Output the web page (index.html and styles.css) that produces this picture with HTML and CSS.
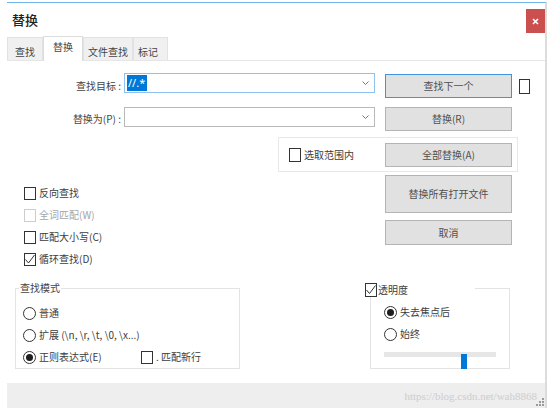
FILE: index.html
```html
<!DOCTYPE html>
<html>
<head>
<meta charset="utf-8">
<link rel="stylesheet" href="styles.css">
</head>
<body>
<div class="window">
  <div class="titlebar">
    <span class="title">替换</span>
    <div class="close"><svg width="7" height="7" viewBox="0 0 7 7"><path d="M1 1L6 6M6 1L1 6" stroke="#fff" stroke-width="1.6"/></svg></div>
  </div>
  <div class="tabs">
    <div class="tab t1">查找</div>
    <div class="tab active t2">替换</div>
    <div class="tab t3">文件查找</div>
    <div class="tab t4">标记</div>
  </div>
  <div class="content">
    <div class="row r1">
      <span class="lbl l1">查找目标 :</span>
      <div class="combo focus"><span class="sel">//.*</span><svg class="chev" width="7" height="4" viewBox="0 0 7 4"><path d="M0.5 0.5L3.5 3.5L6.5 0.5" fill="none" stroke="#777" stroke-width="1"/></svg></div>
      <div class="btn bfocus b1">查找下一个</div>
      <span class="box small"></span>
    </div>
    <div class="row r2">
      <span class="lbl l2">替换为(P) :</span>
      <div class="combo"><span></span><svg class="chev" width="7" height="4" viewBox="0 0 7 4"><path d="M0.5 0.5L3.5 3.5L6.5 0.5" fill="none" stroke="#777" stroke-width="1"/></svg></div>
      <div class="btn b2">替换(R)</div>
    </div>
    <div class="scope">
      <div class="check scopecheck"><span class="box"></span>选取范围内</div>
      <div class="btn b3">全部替换(A)</div>
    </div>
    <div class="lower">
      <div class="options">
        <div class="check"><span class="box"></span>反向查找</div>
        <div class="check disabled"><span class="box"></span>全词匹配(W)</div>
        <div class="check"><span class="box"></span>匹配大小写(C)</div>
        <div class="check"><span class="box"><svg width="12" height="13" viewBox="0 0 12 13"><path d="M1.5 6.5L4.5 10L10.5 2" fill="none" stroke="#333" stroke-width="1"/></svg></span>循环查找(D)</div>
      </div>
      <div class="actions">
        <div class="btn b4">替换所有打开文件</div>
        <div class="btn b5">取消</div>
      </div>
    </div>
    <div class="groups">
      <fieldset class="grp mode">
        <legend class="legend1">查找模式</legend>
        <div class="grpbody mbody">
          <div class="check"><span class="radio"></span>普通</div>
          <div class="check"><span class="radio"></span>扩展 (\n, \r, \t, \0, \x...)</div>
          <div class="check">
            <span class="radioitem"><span class="radio on"></span>正则表达式(E)</span>
            <span class="box"></span>. 匹配新行
          </div>
        </div>
      </fieldset>
      <fieldset class="grp trans">
        <legend class="legend2"><span class="box lbox"><svg width="12" height="14" viewBox="0 0 12 14"><path d="M1.5 7L4.5 10.5L10.5 2.5" fill="none" stroke="#333" stroke-width="1"/></svg></span><span class="ltext">透明度</span></legend>
        <div class="grpbody tbody">
          <div class="check"><span class="radio on"></span>失去焦点后</div>
          <div class="check"><span class="radio"></span>始终</div>
          <div class="slider"><div class="track"></div><div class="thumb"></div></div>
        </div>
      </fieldset>
    </div>
  </div>
  <div class="statusbar">
    <span class="watermark">https://blog.csdn.net/wah8868</span>
    <svg class="grip" width="8" height="8" viewBox="0 0 8 8"><g fill="#9a9a9a"><rect x="6" y="0" width="2" height="2"/><rect x="3" y="3" width="2" height="2"/><rect x="6" y="3" width="2" height="2"/><rect x="0" y="6" width="2" height="2"/><rect x="3" y="6" width="2" height="2"/><rect x="6" y="6" width="2" height="2"/></g></svg>
  </div>
</div>
</body>
</html>
```

FILE: styles.css
```css
* { box-sizing: border-box; margin: 0; padding: 0; }
html, body { width: 549px; height: 415px; background: #fff; overflow: hidden; }
body {
  font-family: "Noto Sans CJK SC", "Noto Sans", sans-serif;
  font-size: 10px;
  line-height: 12px;
  color: #3c3c3c;
}
.window {
  margin: 2px 0 0 7px;
  width: 540px;
  height: 406px;
  border-top: 1px solid #72b3ea;
  border-right: 2px solid #dcdcdc;
  display: flex;
  flex-direction: column;
}
.titlebar {
  height: 33px;
  display: flex;
  justify-content: space-between;
  align-items: flex-start;
}
.title {
  font-size: 13px;
  line-height: 14px;
  padding: 10px 0 0 5px;
  color: #222;
  font-weight: 500;
}
.close {
  width: 19px;
  height: 24px;
  margin-top: 6px;
  background: #c9504f;
  display: flex;
  align-items: center;
  justify-content: center;
}
.tabs {
  height: 25px;
  display: flex;
  align-items: flex-end;
  border-bottom: 1px solid #e6e6e6;
}
.tab {
  height: 23px;
  background: #f0f0f0;
  border: 1px solid #e2e2e2;
  border-bottom: none;
  padding-top: 8px;
  color: #444;
}
.tab.active {
  height: 25px;
  margin-bottom: -1px;
  background: #fff;
  border-color: #dcdcdc;
  padding-top: 4px;
  position: relative;
}
.t1 { width: 36px; padding-left: 7px; }
.t2 { width: 40px; padding-left: 9px; }
.t3 { width: 50px; padding-left: 4px; }
.t4 { width: 35px; padding-left: 4px; }

.content {
  height: 322px;
  padding-top: 12px;
  display: flex;
  flex-direction: column;
}
.row { display: flex; align-items: flex-start; height: 25px; }
.r2 { margin-top: 9px; }
.lbl { width: 114px; text-align: right; color: #444; }
.l1 { padding-top: 7px; }
.l2 { padding-top: 6px; }
.combo {
  margin-left: 3px;
  width: 251px;
  height: 20px;
  border: 1px solid #b9b9b9;
  display: flex;
  align-items: center;
  justify-content: space-between;
  padding: 0 5px 0 1px;
}
.combo.focus { border-color: #8ec1ee; }
.sel {
  background: #0078d7;
  color: #fff;
  font-size: 11px;
  line-height: 16px;
  height: 16px;
  padding: 0 2px 0 1px;
  margin-left: 1px;
  font-family: "Noto Sans", sans-serif;
}
.btn {
  width: 127px;
  height: 24px;
  background: #e1e1e1;
  border: 1px solid #b4b4b4;
  display: flex;
  align-items: center;
  justify-content: center;
  color: #505050;
}
.bfocus { border-color: #3f93df; }
.b1 { margin-left: 10px; margin-top: 1px; }
.b2 { margin-left: 10px; }
.box {
  display: inline-flex;
  width: 12px;
  height: 13px;
  border: 1px solid #333;
  background: #fff;
  flex: none;
  align-items: center;
  justify-content: center;
}
.box svg { flex: none; }
.small { width: 11px; height: 15px; margin-left: 7px; margin-top: 6px; }

.scope {
  margin-top: 5px;
  margin-left: 271px;
  width: 240px;
  height: 35px;
  border: 1px solid #e8e8e8;
  display: flex;
  align-items: center;
  padding-left: 10px;
}
.scopecheck { width: 96px; }
.scopecheck .box { height: 14px; }

.check {
  display: flex;
  align-items: center;
  height: 22px;
  gap: 3px;
  white-space: nowrap;
}
.check.disabled { color: #a6a6a6; }
.check.disabled .box { border-color: #cdcdcd; }

.lower { display: flex; }
.options { width: 378px; padding: 10px 0 0 17px; }
.actions { margin-top: 3px; display: flex; flex-direction: column; gap: 7px; }
.b4 { height: 38px; }
.b5 { height: 25px; }

.groups { display: flex; margin-top: 12px; }
.grp {
  border: 1px solid #e3e3e3;
  height: 87px;
  min-width: 0;
  padding: 0;
}
.mode { margin-left: 8px; width: 225px; }
.trans { margin-left: 130px; width: 140px; }
.legend1 { margin-left: 3px; padding: 0 1px; line-height: 12px; height: 12px; color: #444; }
.legend2 {
  margin-left: -6px;
  width: 110px;
  height: 12px;
  line-height: 12px;
  background: #fff;
  display: flex;
  align-items: flex-start;
  gap: 1px;
}
.lbox { width: 12px; height: 14px; margin-top: 1px; }
.ltext { padding-top: 2px; }
.mbody { padding: 8px 0 0 7px; }
.tbody { padding: 7px 0 0 13px; }
.radio {
  display: inline-flex;
  width: 13px;
  height: 13px;
  border: 1px solid #333;
  border-radius: 50%;
  align-items: center;
  justify-content: center;
  flex: none;
  background: #fff;
}
.radio.on::after {
  content: "";
  width: 7px;
  height: 7px;
  border-radius: 50%;
  background: #1e1e1e;
}
.radioitem { display: flex; align-items: center; gap: 3px; width: 115px; }

.slider { position: relative; height: 20px; }
.track { margin-top: 7px; width: 112px; height: 5px; background: #e6e6e6; }
.thumb {
  position: absolute;
  left: 77px;
  top: 2px;
  width: 6px;
  height: 15px;
  background: #0078d7;
}

.statusbar {
  height: 25px;
  background: #eeeeee;
  display: flex;
  justify-content: flex-end;
  align-items: center;
  padding-right: 1px;
}
.watermark {
  font-family: "Liberation Serif", serif;
  font-size: 11px;
  color: #cdcdcd;
  line-height: 12px;
  margin-top: 1px;
}
.grip { margin-left: -1px; margin-top: 12px; }
```
